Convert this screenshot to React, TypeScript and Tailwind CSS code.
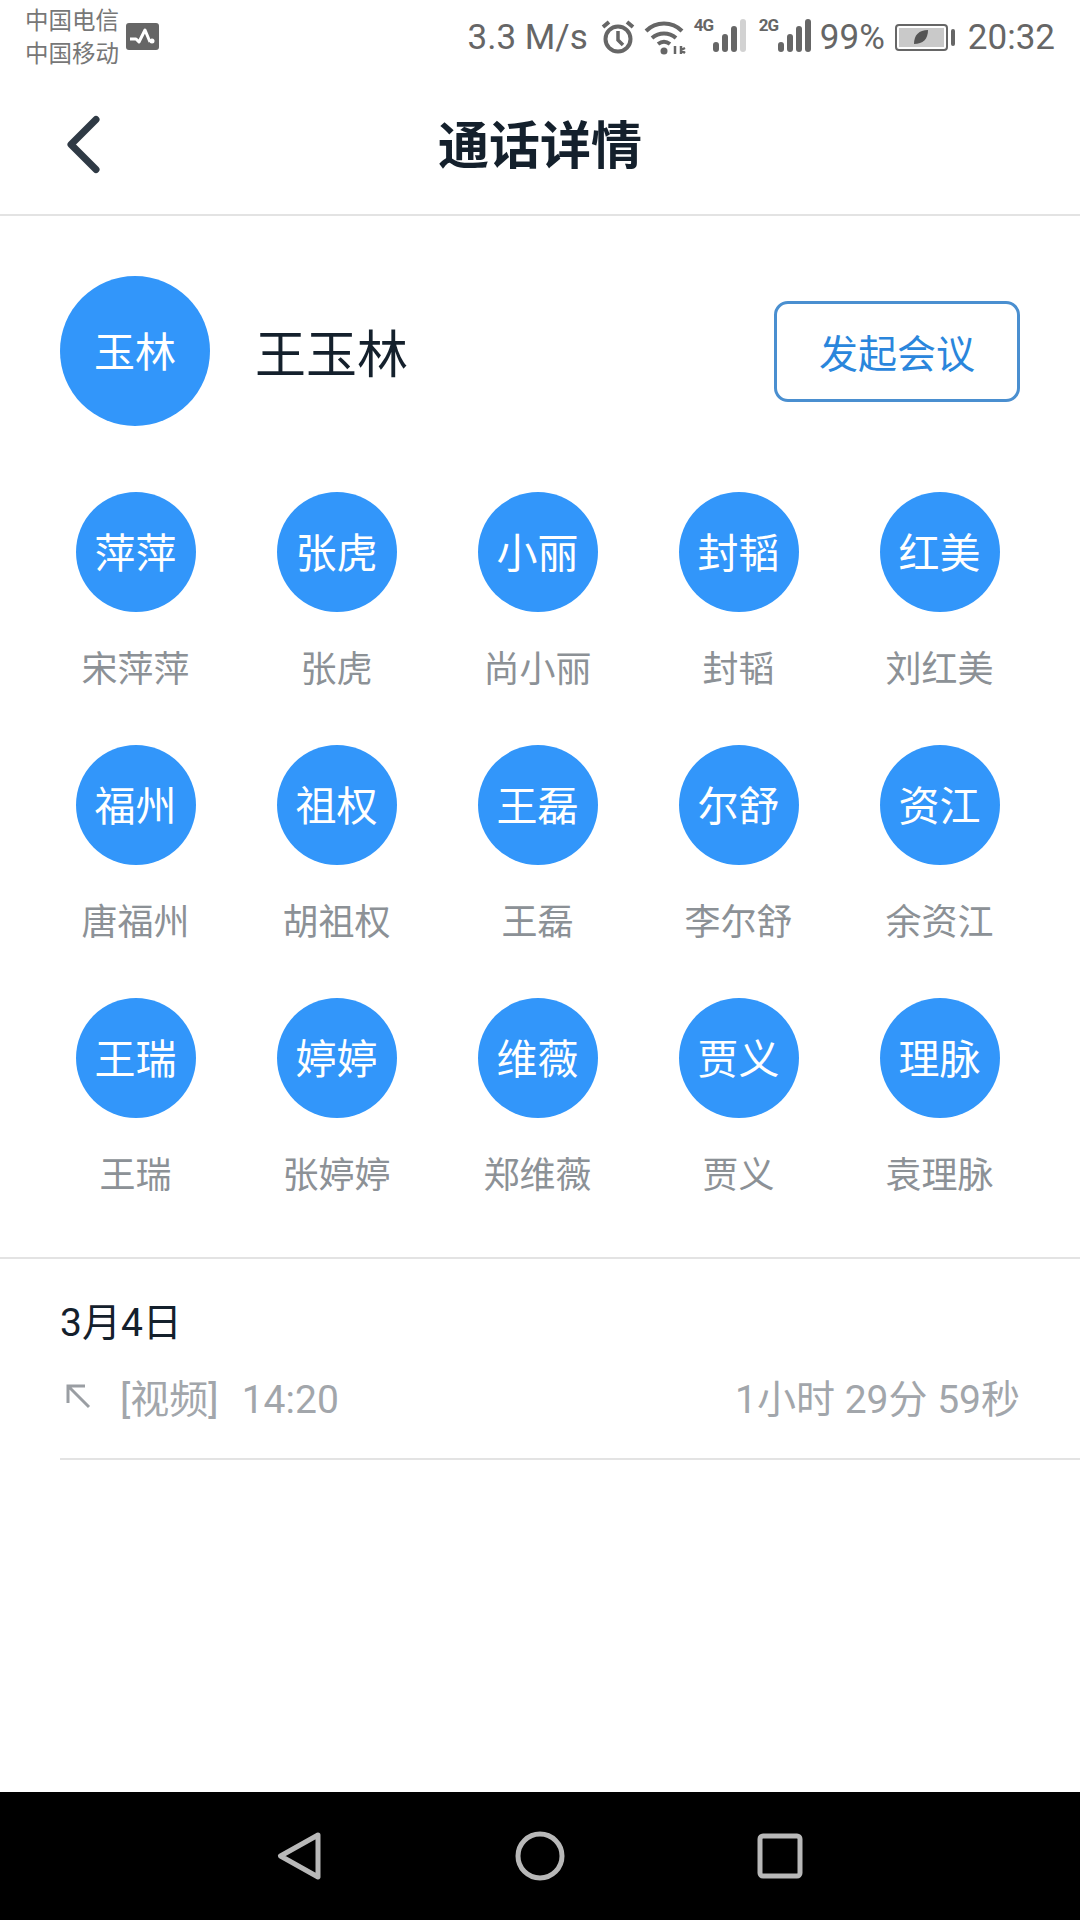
const people = [
  ["萍萍", "宋萍萍"],
  ["张虎", "张虎"],
  ["小丽", "尚小丽"],
  ["封韬", "封韬"],
  ["红美", "刘红美"],
  ["福州", "唐福州"],
  ["祖权", "胡祖权"],
  ["王磊", "王磊"],
  ["尔舒", "李尔舒"],
  ["资江", "余资江"],
  ["王瑞", "王瑞"],
  ["婷婷", "张婷婷"],
  ["维薇", "郑维薇"],
  ["贾义", "贾义"],
  ["理脉", "袁理脉"],
];

const font = { fontFamily: '"Noto Sans CJK SC", "Noto Sans", sans-serif' };

function SignalBars({ active }: { active: number }) {
  const heights = [10, 18, 26, 33];
  return (
    <div className="flex items-end gap-[3px] h-[33px]">
      {heights.map((h, i) => (
        <div
          key={h}
          className={i < active ? "w-[6px] rounded-[3px] bg-[#666666]" : "w-[6px] rounded-[3px] bg-[#d2d2d2]"}
          style={{ height: h }}
        />
      ))}
    </div>
  );
}

function StatusBar() {
  return (
    <div className="h-[70px] flex justify-between text-[#666666]">
      <div className="flex items-start pl-[25px] pt-[3px]">
        <div className="text-[23.5px] leading-[33px] text-[#777777] w-[96px]">
          <div>中国电信</div>
          <div>中国移动</div>
        </div>
        <svg width="33" height="27" viewBox="0 0 33 27" className="ml-[5px] mt-[20px]">
          <rect width="33" height="27" rx="3" fill="#666666" />
          <path d="M4 16h6l3 3 6-12 5 12" fill="none" stroke="#fff" strokeWidth="3" strokeLinejoin="round" />
          <circle cx="26" cy="18" r="2.5" fill="#fff" />
        </svg>
      </div>
      <div className="flex items-center pr-[25px] pt-[4px]">
        <span className="text-[35px] leading-none font-[Roboto] mr-[12px]">3.3 M/s</span>
        <svg width="36" height="36" viewBox="0 0 36 36" fill="none" stroke="#666666" className="mr-[8px]">
          <circle cx="18" cy="20" r="12.5" strokeWidth="4" />
          <path d="M18 12v9l5 5" strokeWidth="3.5" />
          <path d="M3 8l6-5M33 8l-6-5" strokeWidth="4" />
        </svg>
        <svg width="42" height="36" viewBox="0 0 42 36" fill="none" stroke="#666666" strokeWidth="4" className="mr-[8px]">
          <path d="M2 12c10-10 26-10 36 0" />
          <path d="M8 19c7-6 17-6 24 0" />
          <path d="M14 25c4-3 8-3 12 0" />
          <circle cx="20" cy="32" r="3.5" fill="#666666" stroke="none" />
          <path d="M31 27v8M37 27v8M37 31l4-2M37 31l4 3" strokeWidth="2.5" />
        </svg>
        <div className="relative w-[52px] h-[36px] mr-[13px] flex justify-end">
          <span className="absolute left-0 top-[-2px] text-[17px] leading-none font-bold font-[Roboto] tracking-[-1px]">4G</span>
          <SignalBars active={3} />
        </div>
        <div className="relative w-[52px] h-[36px] flex justify-end">
          <span className="absolute left-0 top-[-2px] text-[17px] leading-none font-bold font-[Roboto] tracking-[-1px]">2G</span>
          <SignalBars active={4} />
        </div>
        <span className="text-[35px] leading-none font-[Roboto] ml-[9px] mr-[10px]">99%</span>
        <div className="flex items-center mr-[13px]">
          <div className="w-[53px] h-[27px] border-[2px] border-[#666666] rounded-[4px] p-[2px]">
            <div className="h-full bg-[#c9c9c9] flex items-center justify-center">
              <svg width="16" height="16" viewBox="0 0 16 16">
                <path d="M1 15C1 6 6 1 15 1c0 9-5 14-14 14z" fill="#555555" />
              </svg>
            </div>
          </div>
          <div className="w-[4px] h-[17px] rounded-[2px] bg-[#666666] ml-[3px]" />
        </div>
        <span className="text-[35px] leading-none font-[Roboto]">20:32</span>
      </div>
    </div>
  );
}

function Avatar({ label, big }: { label: string; big?: boolean }) {
  return (
    <div
      className={
        big
          ? "w-[150px] h-[150px] pb-[3px] rounded-full bg-[#3296fa] flex items-center justify-center text-white text-[41px]"
          : "w-[120px] h-[120px] pb-[3px] rounded-full bg-[#3296fa] flex items-center justify-center text-white text-[41px]"
      }
    >
      {label}
    </div>
  );
}

export default function App() {
  return (
    <div className="w-[1080px] h-[1920px] bg-white flex flex-col" style={font}>
      <StatusBar />

      {/* Title bar */}
      <div className="relative h-[146px] flex items-center justify-center border-b-[2px] border-[#e3e3e3]">
        <svg width="44" height="64" viewBox="0 0 44 64" fill="none" className="absolute left-[64px] top-[42px]">
          <path d="M32 7.5L7 32.5l25 25" stroke="#2f3a45" strokeWidth="7" strokeLinecap="round" strokeLinejoin="round" />
        </svg>
        <span className="text-[51px] font-bold text-[#14202c]">通话详情</span>
      </div>

      {/* Caller */}
      <div className="flex items-center pl-[60px] pr-[60px] mt-[60px]">
        <Avatar label="玉林" big />
        <span className="ml-[45px] text-[51px] leading-none text-[#14202c]">王玉林</span>
        <button className="ml-auto w-[246px] h-[101px] rounded-[14px] border-[3px] border-[#4a8fd0] text-[39px] text-[#2a86dc]">
          发起会议
        </button>
      </div>

      {/* Participants */}
      <div className="grid grid-cols-[repeat(5,201px)] gap-y-[54px] pl-[35px] mt-[66px]">
        {people.map(([short, full]) => (
          <div key={full} className="flex flex-col items-center">
            <Avatar label={short} />
            <span className="mt-[30px] h-[49px] text-[36px] leading-[49px] text-[#8c9196]">{full}</span>
          </div>
        ))}
      </div>

      {/* Call log */}
      <div className="mt-[60px] border-t-[2px] border-[#e3e3e3] pl-[60px]">
        <div className="mt-[37px] text-[39px] leading-[54px] text-[#14202c] font-[Roboto,_'Noto_Sans_CJK_SC']">3月4日</div>
        <div className="mt-[23px] flex items-center justify-between pr-[60px] pb-[31px] border-b-[2px] border-[#e3e3e3] text-[39px] leading-[54px] text-[#a2a6ab] font-[Roboto,_'Noto_Sans_CJK_SC']">
          <div className="flex items-center">
            <svg width="26" height="26" viewBox="0 0 26 26" fill="none" stroke="#9a9ea3" strokeWidth="3" className="ml-[5px] mt-[-8px] mr-[29px]">
              <path d="M3 20V3h17M3 3l21 21" />
            </svg>
            <span>[视频]</span>
            <span className="ml-[23px]">14:20</span>
          </div>
          <span>1小时 29分 59秒</span>
        </div>
      </div>

      {/* Android nav bar */}
      <div className="mt-auto h-[128px] bg-black flex items-center">
        <svg width="50" height="56" viewBox="0 0 50 56" fill="none" stroke="#b8b8b8" strokeWidth="5" strokeLinejoin="round" className="ml-[274px]">
          <path d="M44 7L6.5 28 44 49z" />
        </svg>
        <svg width="52" height="52" viewBox="0 0 52 52" fill="none" stroke="#b8b8b8" strokeWidth="5" className="ml-[190px]">
          <circle cx="26" cy="26" r="22" />
        </svg>
        <svg width="46" height="46" viewBox="0 0 46 46" fill="none" stroke="#b8b8b8" strokeWidth="5" className="ml-[191px]">
          <rect x="3" y="3" width="40" height="40" rx="3" />
        </svg>
      </div>
    </div>
  );
}
